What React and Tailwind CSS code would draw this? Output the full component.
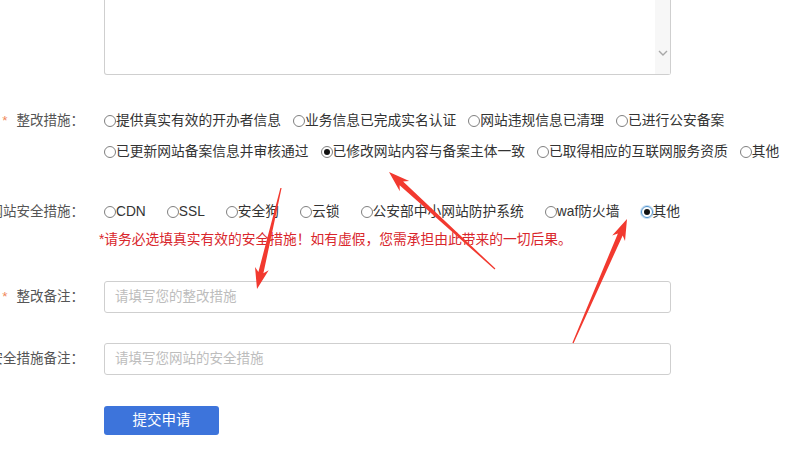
import React from 'react';

// 整改措施 options, split in the two lines shown on the form
const fixRow1 = ['提供真实有效的开办者信息', '业务信息已完成实名认证', '网站违规信息已清理', '已进行公安备案'];
const fixRow2 = [
  { label: '已更新网站备案信息并审核通过' },
  { label: '已修改网站内容与备案主体一致', checked: true },
  { label: '已取得相应的互联网服务资质' },
  { label: '其他' },
];
const security = ['CDN', 'SSL', '安全狗', '云锁', '公安部中小网站防护系统', 'waf防火墙'];

function Radio({ label, checked, focus }) {
  return (
    <label className="flex items-center whitespace-nowrap">
      <span
        className={`flex h-[12px] w-[12px] shrink-0 items-center justify-center rounded-full border ${
          focus ? 'border-[#4b90cc] shadow-[0_0_0_1px_#c3dcf1]' : 'border-[#808080]'
        }`}
      >
        {checked && <span className="h-[6px] w-[6px] rounded-full bg-[#111]" />}
      </span>
      <span>{label}</span>
    </label>
  );
}

function Label({ text, required }) {
  return (
    <div className="flex w-[84px] shrink-0 items-center justify-end whitespace-nowrap text-[13.5px] text-[#555]">
      {required && <span className="mr-[9px] text-[#f0875a]">*</span>}
      <span>{text}</span>
    </div>
  );
}

// red annotation arrow: tapered shaft + barbed head
function arrowPoints(x1, y1, x2, y2) {
  const L = Math.hypot(x2 - x1, y2 - y1);
  const dx = (x2 - x1) / L, dy = (y2 - y1) / L;
  const nx = -dy, ny = dx;
  const h = 21, w = 7, s = 2.6, t = 0.6;
  const bx = x2 - dx * h, by = y2 - dy * h;
  const jx = x2 - dx * h * 0.8, jy = y2 - dy * h * 0.8;
  const p = [
    [x1 + nx * t, y1 + ny * t],
    [jx + nx * s, jy + ny * s],
    [bx + nx * w, by + ny * w],
    [x2, y2],
    [bx - nx * w, by - ny * w],
    [jx - nx * s, jy - ny * s],
    [x1 - nx * t, y1 - ny * t],
  ];
  return p.map(([a, b]) => `${a.toFixed(1)},${b.toFixed(1)}`).join(' ');
}

const arrows = [
  [281, 188, 257, 289],
  [495, 269, 389, 172],
  [573, 343, 627, 219],
];

export default function App() {
  return (
    <div className="relative h-[455px] w-[801px] overflow-hidden bg-white font-['Liberation_Sans','Noto_Sans_CJK_SC',sans-serif] text-[#333]">
      {/* textarea, top cut off */}
      <div className="pl-[104px]">
        <div className="flex h-[75px] w-[567px] justify-end rounded-b-[3px] border-x border-b border-[#cfcfcf]">
          <div className="flex w-[15px] flex-col items-center justify-end bg-[#f7f7f7] pb-[18px]">
            <svg width="10" height="6" viewBox="0 0 10 6">
              <polyline points="1,1 5,5 9,1" fill="none" stroke="#a8a8a8" strokeWidth="1.4" />
            </svg>
          </div>
        </div>
      </div>

      {/* 整改措施 */}
      <div className="mt-[36px] flex">
        <div className="flex h-[20px]">
          <Label text="整改措施：" required />
        </div>
        <div className="ml-[20px] flex flex-col gap-[11px] text-[13.75px] leading-[20px]">
          <div className="flex gap-x-[12px]">
            {fixRow1.map(l => <Radio key={l} label={l} />)}
          </div>
          <div className="flex gap-x-[12px]">
            {fixRow2.map(o => <Radio key={o.label} label={o.label} checked={o.checked} />)}
          </div>
        </div>
      </div>

      {/* 网站安全措施 */}
      <div className="mt-[40px] flex h-[20px]">
        <Label text="网站安全措施：" />
        <div className="ml-[20px] flex gap-x-[21px] text-[13.75px] leading-[20px]">
          {security.map(l => <Radio key={l} label={l} />)}
          <Radio label="其他" checked focus />
        </div>
      </div>

      <div className="mt-[8px] pl-[99px] text-[13.75px] leading-[20px] text-[#d9262c]">
        *请务必选填真实有效的安全措施！如有虚假，您需承担由此带来的一切后果。
      </div>

      {/* 整改备注 */}
      <div className="mt-[31px] flex items-center">
        <Label text="整改备注：" required />
        <div className="ml-[20px] flex h-[32px] w-[567px] items-center rounded-[3px] border border-[#cfcfcf] px-[10px] text-[13.5px] text-[#bdbdbd]">
          请填写您的整改措施
        </div>
      </div>

      {/* 安全措施备注 */}
      <div className="mt-[30px] flex items-center">
        <Label text="安全措施备注：" />
        <div className="ml-[20px] flex h-[32px] w-[567px] items-center rounded-[3px] border border-[#cfcfcf] px-[10px] text-[13.5px] text-[#bdbdbd]">
          请填写您网站的安全措施
        </div>
      </div>

      <div className="mt-[31px] pl-[104px]">
        <button className="flex h-[29px] w-[115px] items-center justify-center rounded-[3px] bg-[#3d74db] text-[14.5px] text-white">
          提交申请
        </button>
      </div>

      {/* annotation arrows over the screenshot */}
      <svg className="pointer-events-none absolute left-0 top-0" width="801" height="455">
        {arrows.map((a, i) => (
          <polygon key={i} points={arrowPoints(...a)} fill="#f2392f" />
        ))}
      </svg>
    </div>
  );
}
